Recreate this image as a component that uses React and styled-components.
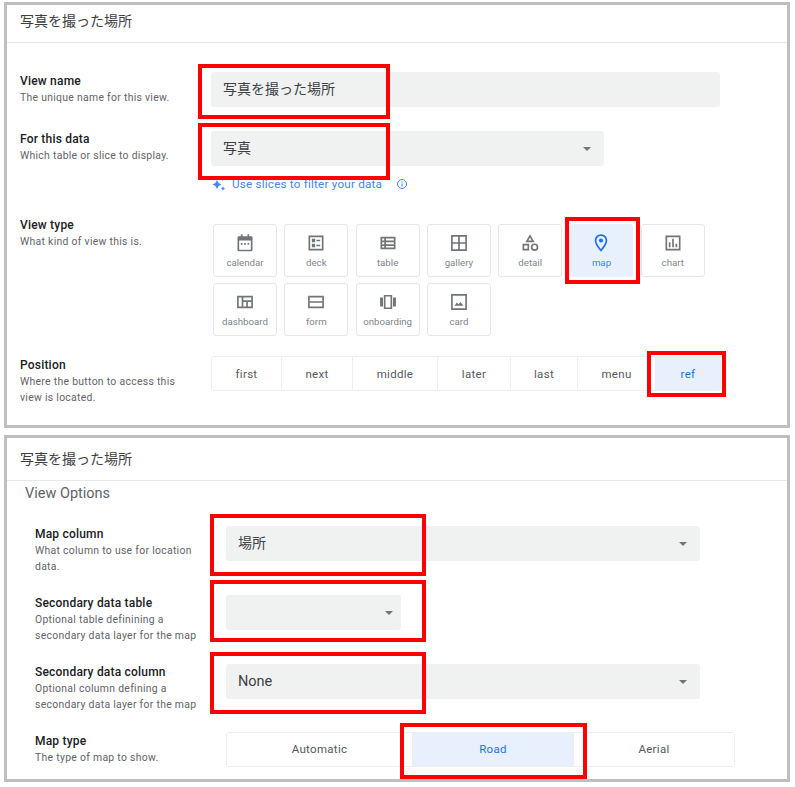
import React from 'react';
import styled, { createGlobalStyle } from 'styled-components';

const Global = createGlobalStyle`
  html, body { margin: 0; padding: 0; background: #fff; }
  body { font-family: Roboto, "Noto Sans CJK JP", sans-serif; color: #3c4043; }
`;
const Page = styled.div`
  width: 795px; height: 787px; box-sizing: border-box; padding: 2px 0 0 4px;
  display: flex; flex-direction: column; gap: 7px;
`;
const Panel = styled.section`
  box-sizing: border-box; width: 786px; height: ${p => p.$h}px;
  border: 3px solid #bfbfbf; display: flex; flex-direction: column;
`;
const Header = styled.header`
  height: ${p => p.$h}px; flex: none; box-sizing: border-box; border-bottom: 1px solid #e6e7e9;
  padding: 0 0 ${p => p.$pb}px 13px; display: flex; align-items: center;
  font-size: 14px; color: #3c4043; font-family: "Noto Sans CJK JP", sans-serif;
`;
const Section = styled.div`
  padding: ${p => p.$pad}; display: flex; flex-direction: column;
`;
const Row = styled.div`
  display: grid; grid-template-columns: ${p => p.$col}px 1fr; height: ${p => p.$h}px; align-items: start;
`;
const Label = styled.div`margin-top: ${p => p.$top || 0}px;`;
const Title = styled.div`font-size: 12px; font-weight: 500; line-height: 16px; color: #202124; letter-spacing: .2px;`;
const Desc = styled.div`font-size: 10.4px; line-height: 15.6px; color: #5f6368; letter-spacing: .3px; margin-top: 1px;`;
const Anchor = styled.div`position: relative; width: ${p => p.$w ? p.$w + 'px' : 'auto'};`;
const Field = styled.div`
  height: 35px; background: #f0f2f2; border-radius: 3px; width: ${p => p.$w}px; box-sizing: border-box;
  padding: 0 12px; display: flex; align-items: center; justify-content: space-between;
  font-size: 14px; color: #3c4043; font-family: Roboto, "Noto Sans CJK JP", sans-serif;
`;
const FieldText = styled.span`margin-bottom: ${p => p.$up}px; font-size: ${p => p.$fs || 14}px;`;
const Caret = styled.span`
  width: 0; height: 0; border-left: 4px solid transparent; border-right: 4px solid transparent;
  border-top: 4px solid #70757a; margin-right: ${p => p.$mr}px; flex: none;
`;
const Mark = styled.div`
  position: absolute; left: ${p => p.$l}px; top: ${p => p.$t}px; width: ${p => p.$w}px; height: ${p => p.$h}px;
  box-sizing: border-box; border: 4px solid #f00; pointer-events: none; z-index: 2;
`;
const Hint = styled.div`
  display: flex; align-items: center; gap: 6px; margin-top: 10px; padding-left: 1px; height: 16px;
  color: #4285f4; font-size: 11.7px; letter-spacing: .2px;
  svg:last-child { margin-left: 8px; }
`;
const Tiles = styled.div`
  display: grid; grid-template-columns: repeat(7, 64px); gap: 6.5px 7.3px; padding-left: 2px;
`;
const Tile = styled.div`
  height: 52.5px; box-sizing: border-box; border: 1px solid #e4e6e8; border-radius: 3px;
  display: flex; flex-direction: column; align-items: center; padding-top: 8px;
  font-size: 9.7px; color: ${p => p.$on ? '#4285f4' : '#80868b'}; background: ${p => p.$on ? '#e8f0fe' : '#fff'};
  border-color: ${p => p.$on ? '#e8f0fe' : '#e4e6e8'};
  svg { width: 20px; height: 20px; display: block; margin-bottom: 4px; color: ${p => p.$on ? '#1a73e8' : '#70757a'}; }
`;
const Seg = styled.div`
  display: flex; height: 35px; margin-top: -1px; box-sizing: border-box; border: 1px solid #eceef0; border-radius: 3px;
  width: ${p => p.$w}px;
`;
const SegItem = styled.div`
  width: ${p => p.$w}px; flex: none; box-sizing: border-box; display: flex; align-items: center; justify-content: center;
  font-size: 11.5px; letter-spacing: .3px; font-weight: 400; padding-bottom: ${p => p.$pb || 0}px;
  border-left: ${p => p.$first ? 'none' : '1px solid #eceef0'};
  color: ${p => p.$on ? '#1a73e8' : '#55595e'}; background: ${p => p.$on ? '#e8f0fe' : '#fff'};
`;
const Sub = styled.div`
  font-size: 14.5px; color: #5f6368; padding: 3px 0 0 18px; height: 38px; line-height: 20px; box-sizing: border-box;
`;

const S = { viewBox: '0 0 24 24', fill: 'currentColor' };
const icons = {
  calendar: <svg {...S}><path d="M7 1.5h2V4h6V1.5h2V4h2.5A1.5 1.5 0 0 1 21 5.5v15a1.5 1.5 0 0 1-1.500 1.500h-15A1.500 1.500 0 0 1 3 20.500v-15A1.500 1.500 0 0 1 4.500 4H7V1.500zM5 9v11h14V9H5z" /><path d="M7 12h2v2H7zM11 12h2v2h-2zM15 12h2v2h-2z" /></svg>,
  deck: <svg {...S}><path d="M3 3h18v18H3V3zm2 2v14h14V5H5z" /><path d="M7 7h4v4H7zM7 13h4v4H7zM12.500 8h4.500v2h-4.500zM12.500 14h4.500v2h-4.500z" /></svg>,
  table: <svg {...S}><path d="M3 4.500h18v15H3v-15zm2 2V9h2.500V6.500H5zm4.500 0V9H19V6.500H9.500zM5 11v2.500h2.500V11H5zm4.500 0v2.500H19V11H9.500zM5 15.500v2h2.500v-2H5zm4.500 0v2H19v-2H9.500z" /></svg>,
  gallery: <svg {...S}><path d="M2.500 2.500h19v19h-19v-19zm2 2V11H11V4.500H4.500zm8.500 0V11h6.500V4.500H13zM4.500 13v6.500H11V13H4.500zm8.500 0v6.500h6.500V13H13z" /></svg>,
  detail: <svg {...S}><path d="M12 1.500 17.500 11h-11L12 1.500zm0 4L10 9h4l-2-3.500z" /><path d="M3 13h8v8H3v-8zm2 2v4h4v-4H5z" /><path fillRule="evenodd" d="M17.500 12.500a4.500 4.500 0 1 1 0 9 4.500 4.500 0 0 1 0-9zm0 2a2.500 2.500 0 1 0 0 5 2.500 2.500 0 0 0 0-5z" /></svg>,
  map: <svg {...S}><path fillRule="evenodd" d="M12 1.500c-4.400 0-7.500 3.300-7.500 7.500 0 4.800 5 10.500 7.500 13.500 2.500-3 7.500-8.700 7.500-13.500 0-4.200-3.100-7.500-7.500-7.500zm0 2c3.200 0 5.500 2.400 5.500 5.500 0 3.200-3.300 7.500-5.500 10.300-2.200-2.800-5.500-7.100-5.500-10.300 0-3.100 2.300-5.500 5.500-5.500z" /><circle cx="12" cy="9" r="2.500" /></svg>,
  chart: <svg {...S}><path d="M3 3h18v18H3V3zm2 2v14h14V5H5z" /><path d="M7 11h2v6H7zM11 7h2v10h-2zM15 13h2v4h-2z" /></svg>,
  dashboard: <svg {...S}><path d="M2.500 4.500h19v15h-19v-15zm2 2v11h3.500v-11H4.500zm5.500 0V10h9.500V6.500H10zm0 5.500v5.500h3.500V12H10zm5.500 0v5.500h4V12h-4z" /></svg>,
  form: <svg {...S}><path d="M2.500 4.500h19v15h-19v-15zm2 2V11h15V6.500h-15zm0 6.500v4.500h15V13h-15z" /></svg>,
  onboarding: <svg {...S}><path d="M7 3.500h10v17H7v-17zm2 2v13h6v-13H9z" /><path d="M2.500 6.500H6v11H2.500zM18 6.500h3.500v11H18z" /></svg>,
  card: <svg {...S}><path d="M2.500 2.500h19v19h-19v-19zm2 2v15h15v-15h-15z" /><path d="m6.500 16.500 3-4 2 2.500 2-3 4 4.500h-11z" /></svg>,
};
const tiles = ['calendar','deck','table','gallery','detail','map','chart','dashboard','form','onboarding','card'];

const Spark = () => (
  <svg width="14" height="14" viewBox="0 0 14 14" fill="#4285f4"><path d="M5 3l1.500 3L9.500 7.500 6.500 9 5 12 3.500 9 .5 7.500 3.500 6zM11 9.500l.8 1.200 1.200.8-1.200.8-.8 1.200-.8-1.200-1.200-.8 1.200-.8zM10.500 1l.6 1 .9.500-.9.500-.6 1-.6-1-.9-.5.9-.5z" /></svg>
);
const Info = () => (
  <svg width="12" height="12" viewBox="0 0 12 12" fill="none" stroke="#4285f4"><circle cx="6" cy="6" r="4.500" /><path d="M6 5.500v3M6 3.500v1" /></svg>
);

export default function App() {
  return (
    <Page>
      <Global />
      <Panel $h={426}>
        <Header $h={38} $pb={8}>写真を撮った場所</Header>
        <Section $pad="29px 0 0 13px">
          <Row $col={191} $h={59}>
            <Label $top={1}><Title>View name</Title><Desc>The unique name for this view.</Desc></Label>
            <Anchor $w={509}>
              <Field $w={509}><FieldText $up={4}>写真を撮った場所</FieldText></Field>
              <Mark $l={-13} $t={-8} $w={192} $h={55} />
            </Anchor>
          </Row>
          <Row $col={191} $h={93}>
            <Label><Title>For this data</Title><Desc>Which table or slice to display.</Desc></Label>
            <Anchor $w={393}>
              <Field $w={393}><FieldText $up={4}>写真</FieldText><Caret $mr={1} /></Field>
              <Mark $l={-13} $t={-8} $w={192} $h={57} />
              <Hint><Spark />Use slices to filter your data<Info /></Hint>
            </Anchor>
          </Row>
          <Row $col={191} $h={133}>
            <Label $top={-7}><Title>View type</Title><Desc>What kind of view this is.</Desc></Label>
            <Anchor>
              <Tiles>
                {tiles.map(t => <Tile key={t} $on={t === 'map'}>{icons[t]}{t}</Tile>)}
              </Tiles>
              <Mark $l={354} $t={-7} $w={75} $h={67} />
            </Anchor>
          </Row>
          <Row $col={191} $h={60}>
            <Label><Title>Position</Title><Desc>Where the button to access this<br />view is located.</Desc></Label>
            <Anchor $w={510}>
              <Seg $w={510}>
                <SegItem $first $w={69}>first</SegItem>
                <SegItem $w={71}>next</SegItem>
                <SegItem $w={85}>middle</SegItem>
                <SegItem $w={73}>later</SegItem>
                <SegItem $w={67}>last</SegItem>
                <SegItem $w={78}>menu</SegItem>
                <SegItem $w={65} $on>ref</SegItem>
              </Seg>
              <Mark $l={436} $t={-6} $w={79} $h={46} />
            </Anchor>
          </Row>
        </Section>
      </Panel>
      <Panel $h={347}>
        <Header $h={43} $pb={2}>写真を撮った場所</Header>
        <Sub>View Options</Sub>
        <Section $pad="7px 0 0 28px">
          <Row $col={191} $h={69}>
            <Label><Title>Map column</Title><Desc>What column to use for location<br />data.</Desc></Label>
            <Anchor $w={474}>
              <Field $w={474}><FieldText $up={4}>場所</FieldText><Caret $mr={1} /></Field>
              <Mark $l={-16} $t={-12} $w={216} $h={62} />
            </Anchor>
          </Row>
          <Row $col={191} $h={69}>
            <Label><Title>Secondary data table</Title><Desc>Optional table definining a<br />secondary data layer for the map</Desc></Label>
            <Anchor $w={175}>
              <Field $w={175}><span /><Caret $mr={-4} /></Field>
              <Mark $l={-16} $t={-15} $w={216} $h={62} />
            </Anchor>
          </Row>
          <Row $col={191} $h={69}>
            <Label><Title>Secondary data column</Title><Desc>Optional column defining a<br />secondary data layer for the map</Desc></Label>
            <Anchor $w={474}>
              <Field $w={474}><FieldText $up={0} $fs={14.5}>None</FieldText><Caret $mr={1} /></Field>
              <Mark $l={-16} $t={-12} $w={216} $h={62} />
            </Anchor>
          </Row>
          <Row $col={191} $h={40}>
            <Label><Title>Map type</Title><Desc>The type of map to show.</Desc></Label>
            <Anchor $w={509}>
              <Seg $w={509}>
                <SegItem $first $w={185} $pb={1}>Automatic</SegItem>
                <SegItem $w={161} $on $pb={1}>Road</SegItem>
                <SegItem $w={161} $pb={1}>Aerial</SegItem>
              </Seg>
              <Mark $l={174} $t={-10} $w={187} $h={56} />
            </Anchor>
          </Row>
        </Section>
      </Panel>
    </Page>
  );
}
